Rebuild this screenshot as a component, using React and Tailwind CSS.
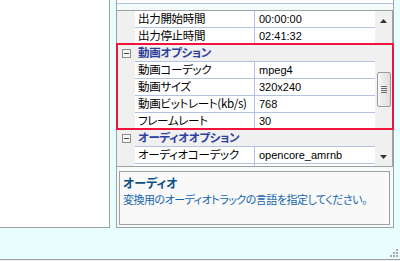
import React from "react";

const rows = [
  { name: "出力開始時間", value: "00:00:00" },
  { name: "出力停止時間", value: "02:41:32" },
  { cat: "動画オプション" },
  { name: "動画コーデック", value: "mpeg4" },
  { name: "動画サイズ", value: "320x240" },
  { name: "動画ビットレート(kb/s)", value: "768" },
  { name: "フレームレート", value: "30" },
  { cat: "オーディオオプション" },
  { name: "オーディオコーデック", value: "opencore_amrnb" },
  { name: "オーディオビットレート", value: "12.2" },
];

const jp = "font-['Noto_Sans_CJK_JP',sans-serif] [font-feature-settings:'palt']";

const Minus = () => (
  <div className="w-[9px] h-[9px] border border-[#8c8c8c] bg-[#f7f7f7] flex items-center justify-center">
    <div className="w-[5px] h-px bg-[#444]" />
  </div>
);

const Row = ({ row }) => {
  if (row.cat) {
    return (
      <div className="flex h-[17px] bg-[#f0f0f0] shrink-0">
        <div className="w-[18px] flex items-center justify-center">
          <Minus />
        </div>
        <div className={`flex-1 border-b border-[#b4c2e0] pl-[3px] flex items-center text-[11.5px] tracking-[-0.3px] font-bold text-[#2b3f9f] leading-none ${jp}`}>
          {row.cat}
        </div>
      </div>
    );
  }
  return (
    <div className="flex h-[17px] shrink-0">
      <div className="w-[18px] bg-[#f0f0f0]" />
      <div className="flex-1 flex border-b border-[#b4c2e0] bg-white">
        <div className={`w-[120px] border-r border-[#b4c2e0] pl-[3px] flex items-center text-[11.5px] tracking-[-0.3px] text-black leading-none whitespace-nowrap overflow-hidden ${jp}`}>
          {row.name}
        </div>
        <div className="flex-1 pl-[4px] flex items-center text-[11px] text-black leading-none font-['Liberation_Sans',sans-serif]">
          {row.value}
        </div>
      </div>
    </div>
  );
};

const Scrollbar = () => (
  <div className="w-[17px] bg-[#f0f0f0] flex flex-col items-center">
    <div className="h-[20px] flex items-center justify-center">
      <svg width="7" height="4" viewBox="0 0 7 4">
        <path d="M0 4 L3.5 0 L7 4 Z" fill="#333" />
      </svg>
    </div>
    <div className="h-[41px]" />
    <div className="w-[14px] h-[35px] rounded-[2px] border border-[#9a9a9a] bg-gradient-to-r from-[#f6f6f6] to-[#dedede] flex flex-col items-center justify-center gap-[1px]">
      <div className="w-[6px] h-px bg-[#6a6a6a]" />
      <div className="w-[6px] h-px bg-[#6a6a6a]" />
      <div className="w-[6px] h-px bg-[#6a6a6a]" />
      <div className="w-[6px] h-px bg-[#6a6a6a]" />
    </div>
    <div className="flex-1" />
    <div className="h-[18px] flex items-center justify-center">
      <svg width="7" height="4" viewBox="0 0 7 4">
        <path d="M0 0 L7 0 L3.5 4 Z" fill="#333" />
      </svg>
    </div>
  </div>
);

const Grip = () => (
  <svg width="10" height="10" viewBox="0 0 10 10">
    {[
      [7, 1], [7, 4], [4, 4], [7, 7], [4, 7], [1, 7],
    ].map(([x, y], i) => (
      <rect key={i} x={x} y={y} width="2" height="2" fill="#a8a8a8" />
    ))}
  </svg>
);

export default function App() {
  return (
    <div className="relative w-[400px] h-[261px] overflow-hidden bg-[#e8fdfd]">
      <div className="flex gap-[6px] h-[228px]">
        <div className="w-[110px] h-[228px] bg-white border-r border-b border-[#a0a0a0]" />
        <div className="w-[278px] h-[228px] flex flex-col border-l border-r border-b border-[#a0a0a0] bg-[#f4fbfd]">
          <div className="h-[4px] bg-white border-b border-[#b0c4d8]" />
          <div className="mt-[6px] h-[157px] flex border-t border-b border-r border-[#a0a0a0] bg-white">
            <div className="flex-1 flex flex-col overflow-hidden">
              {rows.map((r, i) => (
                <Row key={i} row={r} />
              ))}
            </div>
            <Scrollbar />
          </div>
          <div className="mt-[4px] ml-[2px] w-[271px] h-[54px] border border-[#a0a0a0] bg-[#f9f9f9] px-[3px] pt-[3px]">
            <div className={`text-[12px] font-bold text-[#0b4f8a] leading-[16px] ${jp}`}>オーディオ</div>
            <div className={`text-[11px] tracking-[-0.5px] text-[#1466b0] leading-[16px] whitespace-nowrap ${jp}`}>
              変換用のオーディオトラックの言語を指定してください。
            </div>
          </div>
        </div>
      </div>
      <div className="h-[31px]" />
      <div className="h-px bg-[#a0a0a0]" />
      <div className="h-px bg-[#f0f0f0]" />
      <div className="absolute left-[116px] top-[43px] w-[278px] h-[87px] border-2 border-[#f0143c]" />
      <div className="absolute left-[389px] top-[248px]">
        <Grip />
      </div>
    </div>
  );
}
